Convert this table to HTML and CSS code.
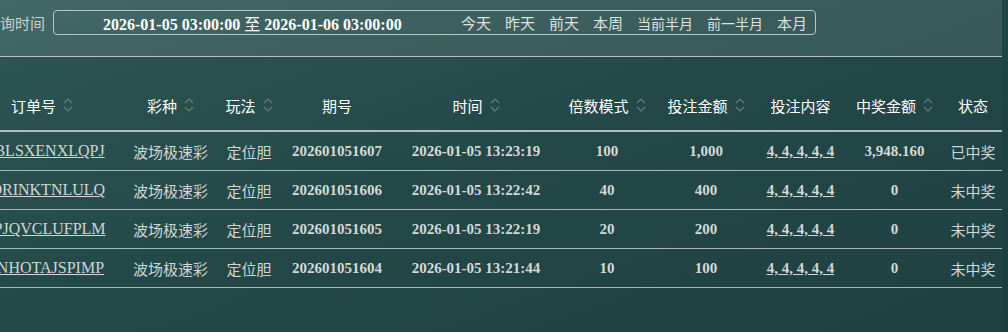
FILE: index.html
```html
<!DOCTYPE html>
<html lang="zh">
<head>
<meta charset="utf-8">
<link rel="stylesheet" href="styles.css">
</head>
<body>
<div class="viewport">
  <div class="page">
    <div class="filter">
      <span class="label">查询时间</span>
      <div class="range-box">
        <span class="range">2026-01-05 03:00:00 <span class="cjk">至</span> 2026-01-06 03:00:00</span>
        <div class="quick">
          <span>今天</span><span>昨天</span><span>前天</span><span>本周</span><span class="wide">当前半月</span><span class="wide">前一半月</span><span>本月</span>
        </div>
      </div>
    </div>
    <table class="orders">
      <colgroup>
        <col class="c1"><col class="c2"><col class="c3"><col class="c4"><col class="c5"><col class="c6"><col class="c7"><col class="c8"><col class="c9"><col class="c10">
      </colgroup>
      <thead>
        <tr>
          <th><span class="th">订单号<svg class="sort" viewBox="0 0 10 16"><polyline points="1,6 5,2 9,6"/><polyline points="1,10 5,14 9,10"/></svg></span></th>
          <th><span class="th">彩种<svg class="sort" viewBox="0 0 10 16"><polyline points="1,6 5,2 9,6"/><polyline points="1,10 5,14 9,10"/></svg></span></th>
          <th><span class="th">玩法<svg class="sort" viewBox="0 0 10 16"><polyline points="1,6 5,2 9,6"/><polyline points="1,10 5,14 9,10"/></svg></span></th>
          <th><span class="th">期号</span></th>
          <th><span class="th">时间<svg class="sort" viewBox="0 0 10 16"><polyline points="1,6 5,2 9,6"/><polyline points="1,10 5,14 9,10"/></svg></span></th>
          <th><span class="th">倍数模式<svg class="sort" viewBox="0 0 10 16"><polyline points="1,6 5,2 9,6"/><polyline points="1,10 5,14 9,10"/></svg></span></th>
          <th><span class="th">投注金额<svg class="sort" viewBox="0 0 10 16"><polyline points="1,6 5,2 9,6"/><polyline points="1,10 5,14 9,10"/></svg></span></th>
          <th><span class="th">投注内容</span></th>
          <th><span class="th">中奖金额<svg class="sort" viewBox="0 0 10 16"><polyline points="1,6 5,2 9,6"/><polyline points="1,10 5,14 9,10"/></svg></span></th>
          <th><span class="th">状态</span></th>
        </tr>
      </thead>
      <tbody>
        <tr>
          <td><a class="oid">WBLSXENXLQPJ</a></td>
          <td class="cjk">波场极速彩</td>
          <td class="cjk">定位胆</td>
          <td class="num">202601051607</td>
          <td class="num">2026-01-05 13:23:19</td>
          <td class="num">100</td>
          <td class="num">1,000</td>
          <td class="num"><a class="bet">4, 4, 4, 4, 4</a></td>
          <td class="num">3,948.160</td>
          <td class="cjk won">已中奖</td>
        </tr>
        <tr>
          <td><a class="oid">HDRINKTNLULQ</a></td>
          <td class="cjk">波场极速彩</td>
          <td class="cjk">定位胆</td>
          <td class="num">202601051606</td>
          <td class="num">2026-01-05 13:22:42</td>
          <td class="num">40</td>
          <td class="num">400</td>
          <td class="num"><a class="bet">4, 4, 4, 4, 4</a></td>
          <td class="num">0</td>
          <td class="cjk lost">未中奖</td>
        </tr>
        <tr>
          <td><a class="oid">WPJQVCLUFPLM</a></td>
          <td class="cjk">波场极速彩</td>
          <td class="cjk">定位胆</td>
          <td class="num">202601051605</td>
          <td class="num">2026-01-05 13:22:19</td>
          <td class="num">20</td>
          <td class="num">200</td>
          <td class="num"><a class="bet">4, 4, 4, 4, 4</a></td>
          <td class="num">0</td>
          <td class="cjk lost">未中奖</td>
        </tr>
        <tr>
          <td><a class="oid">DINHOTAJSPIMP</a></td>
          <td class="cjk">波场极速彩</td>
          <td class="cjk">定位胆</td>
          <td class="num">202601051604</td>
          <td class="num">2026-01-05 13:21:44</td>
          <td class="num">10</td>
          <td class="num">100</td>
          <td class="num"><a class="bet">4, 4, 4, 4, 4</a></td>
          <td class="num">0</td>
          <td class="cjk lost">未中奖</td>
        </tr>
      </tbody>
    </table>
  </div>
</div>
</body>
</html>
```

FILE: styles.css
```css
html, body {
  margin: 0;
  padding: 0;
}
body {
  width: 1008px;
  height: 332px;
  background: linear-gradient(160deg, #2b5553 0%, #214747 45%, #1c3d3d 100%);
  font-family: "Liberation Serif", "Noto Sans CJK SC", serif;
  color: #d3d8d4;
  overflow: hidden;
}
.viewport {
  width: 1008px;
  height: 332px;
  overflow: hidden;
}
.page {
  margin-left: -39px;
  width: 1041px;
  height: 332px;
  background: rgba(255, 255, 255, 0.015);
}
.cjk {
  font-family: "Noto Sans CJK SC", sans-serif;
  font-weight: normal;
}
.filter {
  display: flex;
  align-items: flex-start;
  padding: 10px 0 21px 24px;
  background: rgba(255, 255, 255, 0.1);
  border-bottom: 1px solid #b7c0bc;
}
.label {
  font-family: "Noto Sans CJK SC", sans-serif;
  font-size: 15px;
  line-height: 25px;
  color: #c9d0cc;
  width: 60px;
  margin-right: 8px;
}
.range-box {
  box-sizing: border-box;
  width: 763px;
  height: 25px;
  border: 1px solid #bcc4c0;
  border-radius: 4px;
  display: flex;
  align-items: center;
  padding: 0 8px 0 49px;
}
.range {
  font-weight: bold;
  font-size: 16px;
  color: #ffffff;
  white-space: nowrap;
}
.range .cjk {
  font-size: 16px;
}
.quick {
  margin-left: auto;
  display: flex;
  align-items: center;
  gap: 14px;
  font-family: "Noto Sans CJK SC", sans-serif;
  font-size: 15px;
  color: #dde2de;
  white-space: nowrap;
}
.quick .wide {
  font-size: 14px;
}
.orders {
  margin-top: 23px;
  width: 1041px;
  table-layout: fixed;
  border-collapse: collapse;
}
.c1 { width: 162px; }
.c2 { width: 95px; }
.c3 { width: 62px; }
.c4 { width: 114px; }
.c5 { width: 164px; }
.c6 { width: 98px; }
.c7 { width: 100px; }
.c8 { width: 89px; }
.c9 { width: 99px; }
.c10 { width: 58px; }
.orders th {
  height: 50px;
  padding: 0;
  font-family: "Noto Sans CJK SC", sans-serif;
  font-weight: normal;
  font-size: 15px;
  color: #ffffff;
  text-align: center;
  border-bottom: 2px solid #b3bcb8;
  white-space: nowrap;
}
.th {
  display: inline-flex;
  align-items: center;
  gap: 7px;
}
.sort {
  width: 10px;
  height: 16px;
  fill: none;
  stroke: #687c73;
  stroke-width: 1.2;
}
.orders td {
  height: 38px;
  padding: 0;
  text-align: center;
  white-space: nowrap;
  overflow: visible;
  border-bottom: 1px solid #aab6b2;
  font-size: 15px;
  color: #d0d6d2;
}
.orders td.num {
  font-weight: bold;
  color: #d4d9d5;
}
.oid {
  color: #d0d6d2;
  text-decoration: underline;
  font-size: 16px;
}
.bet {
  color: #d4d9d5;
  text-decoration: underline;
}
.won {
  color: #d0d6d2;
}
.lost {
  color: #d2c69c;
}
```
